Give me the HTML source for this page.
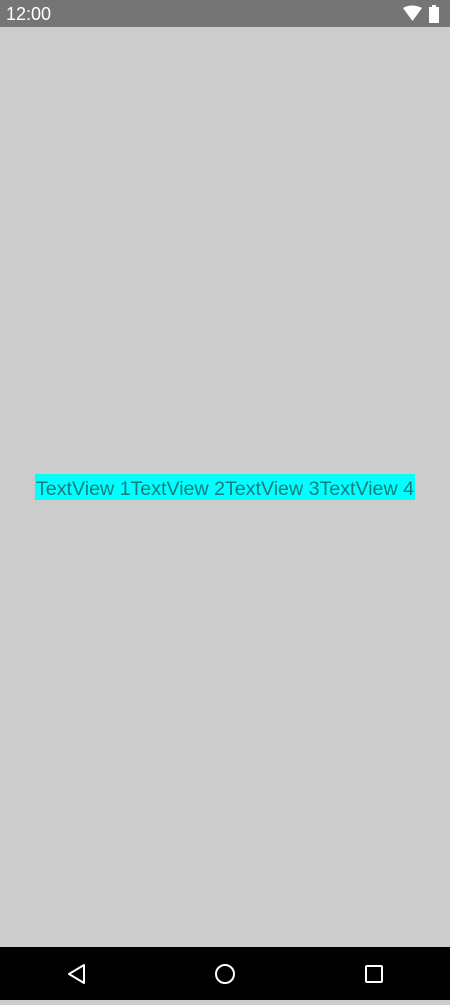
<!DOCTYPE html>
<html><head><meta charset="utf-8"><style>
html,body{margin:0;padding:0;width:450px;height:1000px;overflow:hidden;background:#cccccc;font-family:"Liberation Sans",sans-serif}
.sb{position:absolute;left:0;top:0;width:450px;height:27px;background:#757575;color:#fff}
.sb .t{position:absolute;left:6px;top:4px;font-size:18px}
.nav{position:absolute;left:0;top:947px;width:450px;height:53px;background:#000}
.box{position:absolute;left:35px;top:474px;width:380px;height:26px;background:#00ffff}
</style></head><body>
<div class="sb"><span class="t">12:00</span>
<svg style="position:absolute;left:402px;top:5px" width="40" height="18">
<path d="M1 3 Q10 -2 20 3 L10.5 16 Z" fill="#fff"/>
<rect x="27" y="2" width="10" height="16" fill="#fff"/><rect x="30" y="0" width="4" height="2" fill="#fff"/>
</svg></div>
<div class="box"><svg width="380" height="26"><text x="1" y="21" font-size="19" fill="#167c7c" font-family="Liberation Sans, sans-serif" textLength="378" lengthAdjust="spacingAndGlyphs">TextView 1TextView 2TextView 3TextView 4</text></svg></div>
<div class="nav"><svg width="450" height="53">
<path d="M84 18 L84 36 L69 27 Z" fill="none" stroke="#fff" stroke-width="2" stroke-linejoin="round"/>
<circle cx="225" cy="27" r="9" fill="none" stroke="#fff" stroke-width="2"/>
<rect x="366" y="19" width="16" height="16" fill="none" stroke="#fff" stroke-width="2" rx="1"/>
</svg></div>
</body></html>
